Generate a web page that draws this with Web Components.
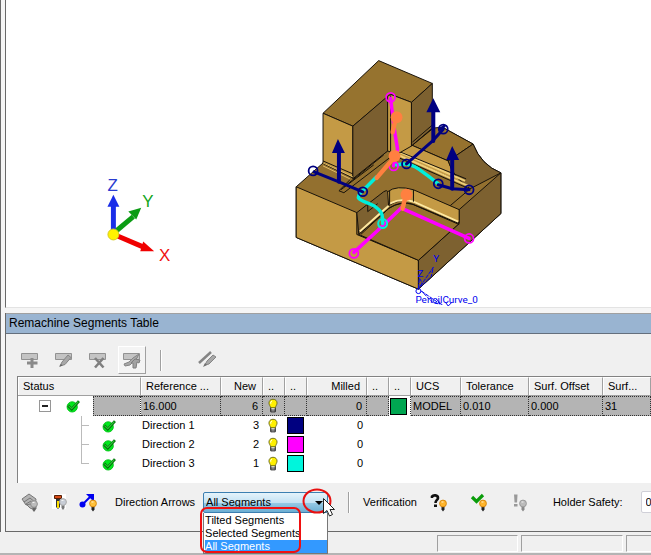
<!DOCTYPE html>
<html lang="en">
<head>
<meta charset="utf-8">
<title>Remachine Segments Table</title>
<style>
  html, body { margin: 0; height: 100%; }
  body { font: 11px/13px "Liberation Sans", Arial, sans-serif; color: #000; background: #f0f0f0; overflow: hidden; }
</style>
</head>
<body>
<machining-app></machining-app>

<script>
const define = (name, html, setup) => {
  const tpl = document.createElement('template');
  tpl.innerHTML = html;
  customElements.define(name, class extends HTMLElement {
    constructor() {
      super();
      this.attachShadow({ mode: 'open' }).append(tpl.content.cloneNode(true));
    }
    connectedCallback() { if (setup) setup(this, this.shadowRoot); }
  });
};

/* ---------- icons ---------- */
const bar = '<path d="M1.500 3.500h16v6h-16z" fill="#c4c4c4" stroke="#929292"/>';
const smallBulb = (x, y, fill, line, base) =>
  `<g transform="translate(${x} ${y})"><path d="M-1.500 3h3v3l-1.500 2-1.500-2z" fill="${base}"/><circle r="3.400" fill="${fill}" stroke="${line}"/><path d="M-1.500 -1.500h2" stroke="#fff" opacity=".8"/></g>`;
const ICONS = {
  add: bar + '<path d="M10.500 8h3v3.500h4v3h-4v3.500h-3v-3.500H7v-3h3.500z" fill="#8a8a8a"/>',
  edit: bar + '<path d="M6 16l2-4 6-7 3 2.500-6 7z" fill="#a8a8a8" stroke="#858585"/><path d="M5 17l2-3 1.500 1.500z" fill="#666"/>',
  remove: bar + '<path d="M7 8l8.500 9.500M15.500 8L7 17.500" stroke="#808080" stroke-width="2.600"/>',
  tools: bar + '<path d="M2 14l5-2 4-4 6-4-2 4-4 4-3 3-5 1z" fill="#a8a8a8" stroke="#858585"/><path d="M9 13l4-4 5 1-1 3-2-1-1 6h-3v-5z" fill="#a2a2a2" stroke="#7e7e7e"/>',
  compare: '<path d="M1 13L13 2" stroke="#858585" stroke-width="2.500"/><path d="M7 15l2-4 6-6 3 2-7 7z" fill="#a8a8a8" stroke="#858585"/><path d="M5 17l2-4 2 2z" fill="#707070"/>',
  check: '<circle cx="8" cy="11" r="5.700" fill="#00e81c" stroke="#00c014"/><path d="M3.500 9.500L7.500 13.500 15.500 4.500" fill="none" stroke="#006b0a" stroke-width="3"/><path d="M3.800 9.500L7.500 13 14.800 5" fill="none" stroke="#2cc435" stroke-width="1.300"/>',
  bulb: '<path d="M7.500 11.500h5v5h-5z" fill="#fff" stroke="#000"/><path d="M7.500 14.500h5" stroke="#000"/><path d="M10 2.500c-3 0-4.500 2-4.500 4.300 0 1.800 1.300 2.900 2 5.200h5c.7-2.300 2-3.400 2-5.200 0-2.300-1.500-4.300-4.500-4.300z" fill="#fff000" stroke="#66661a"/><path d="M7.500 7.500v-2l1.500-1" stroke="#fff" fill="none"/>',
  layers: '<g fill="#b4b4b4" stroke="#777"><path d="M2 7l7-5 7 5-1 7-5-6-6 2z"/><path d="M4 10l6-4 6 5v6l-6-5-4 1zM6 12l5-3 5 4-1 5-5-2z"/></g>' + smallBulb(14, 12, '#bdbdbd', '#909090', '#666'),
  holder: '<path d="M3 2h14v15H3z" fill="#fff"/><path d="M5.500 3.500h7v3h-7z" fill="#d94b17" stroke="#572006"/><path d="M7 7h4v8l-2 2-2-2z" fill="#333"/><path d="M9 9v7" stroke="#ffe000" stroke-width="2"/>' + smallBulb(14, 10, '#c8cdd6', '#aaa', '#777'),
  vector: '<path d="M5 12L12 5" stroke="#0000f0" stroke-width="2"/><path d="M8 2h8v8z" fill="#0000f0"/><circle cx="4.500" cy="12.500" r="3" fill="#0000f0"/>' + smallBulb(15, 11.5, '#ffc13b', '#d98910', '#222'),
  query: '<path d="M3 6V4.500C4 3 9 2.500 9 6c0 2-2.500 2-2.500 5" fill="none" stroke="#111" stroke-width="2.600"/><path d="M5 12.500h3v2.500H5z" fill="#111"/>' + smallBulb(14, 11.5, '#ffb52b', '#d98910', '#222'),
  verify: '<path d="M3 5l4.500 4.500L14 3" fill="none" stroke="#0a9c0a" stroke-width="3.200"/>' + smallBulb(14, 11.5, '#ffb52b', '#d98910', '#222'),
  warn: '<path d="M5 2.500h3.500l-.5 8H5.500z" fill="#999"/><path d="M5 12h3.500v2.500H5z" fill="#999"/>' + smallBulb(14, 11.5, '#bbb', '#999', '#888'),
};
define('ui-icon', `
<style>:host{display:block;width:20px;height:20px;flex:none} svg{display:block;width:100%;height:100%}</style>
<svg viewBox="0 0 20 20" aria-hidden="true"></svg>`,
(el, root) => { root.querySelector('svg').innerHTML = ICONS[el.getAttribute('name')] || ''; });

define('tool-button', `
<style>
  :host{display:block;flex:none}
  button{display:grid;place-items:center;width:28px;height:28px;padding:0;border:1px solid transparent;background:none}
  :host([raised]) button{border-color:#fff #a0a0a0 #a0a0a0 #fff;background:#f4f4f4}
</style>
<button type="button"></button>`,
(el, root) => {
  const icon = document.createElement('ui-icon');
  icon.setAttribute('name', el.getAttribute('icon'));
  const b = root.querySelector('button');
  b.replaceChildren(icon);
  b.setAttribute('aria-label', el.getAttribute('label'));
});

define('tool-separator', `<style>:host{display:block;flex:none;width:1px;height:21px;background:#a0a0a0;border-right:1px solid #fff}</style>`);

define('panel-title', `
<style>
  :host{display:block;background:#99b4d1;border-top:1px solid #a0a0a0;border-bottom:1px solid #646f7d}
  h2{margin:0;padding:0 3px;font:12px/19px "Liberation Sans",Arial,sans-serif;white-space:nowrap}
</style><h2><slot></slot></h2>`);

/* ---------- 3D view ---------- */
define('scene-view', `
<style>
  :host{display:block;background:#fff;border-left:1px solid #696969;border-bottom:1px solid #e3e3e3;min-height:0;overflow:hidden}
  svg{display:block;width:100%;height:100%}
  .axis{font:17px "Liberation Sans",Arial,sans-serif}
  .tag{font:10px Roboto,"Liberation Sans",sans-serif;fill:#0000f0}
</style>
<svg viewBox="6 0 645 309" role="img" aria-label="Part model with pencil curve segments">
  <g stroke="#16110a" stroke-width="1" stroke-linejoin="round">
    <path d="M296 188L323 164 353 178 391 150 412 140 443 128 474 145Q482 166 502 174L502 215 419 291 296 239Z" fill="#93702f"/>
    <path d="M296 188L357 214V236L419 262V291L296 239Z" fill="#c49a45"/>
    <path d="M419 262L460 225V211L502 174V215L419 291Z" fill="#7d6130"/>
    <path d="M357 214L384 193Q390 188 391 204L359 236Z" fill="#7d6130"/>
    <path d="M388 193Q397 186 414 191L460 211V224L414 203Q401 199 389 207Z" fill="#c49a45"/>
    <path d="M359 236L389 210Q401 202 412 205L460 225 419 262Z" fill="#96722e"/>
    <path d="M360 233L389 207M390 205Q402 199 414 203L459 223" fill="none" stroke="#ffe9a0" stroke-width="2"/>
    <path d="M361 236L390 209Q402 202 414 206L460 226M368 205V213L378 205M414 191V203M390 192V206M451 207L471 190" fill="none"/>
    <path d="M412 146L433 129 443 128 474 145 449 162Z" fill="#96722e"/>
    <path d="M412 146L449 162Q454 179 470 187L394 154V150Z" fill="#c49a45"/>
    <path d="M449 162L474 145Q482 166 502 174L471 190Q454 179 449 162Z" fill="#7d6130"/>
    <path d="M394 154L469 187M398 152L466 182" fill="none" stroke="#efcf7a" stroke-width="2"/>
    <path d="M393 156L470 190M396 151L467 180" fill="none"/>
    <path d="M322 164L353 179 389 151 395 155 344 194 339 192 350 181" fill="#93702f"/>
    <path d="M341 191L374 166M344 188L353 181 384 156" fill="none"/>
    <path d="M379 61L433 84 412 103 391 95 353 127 323 114Z" fill="#96732f"/>
    <path d="M323 114L353 127V179L323 164Z" fill="#c49a45"/>
    <path d="M353 127L388 97V152L353 180Z" fill="#7b5f30"/>
    <path d="M388 97L391 95 412 103V147L398 155 388 152Z" fill="#c49a45"/>
    <path d="M433 84V129L412 147V103Z" fill="#7d6130"/>
    <path d="M323 164L353 178M323 167L350 180" fill="none" stroke="#e3bd67"/>
    <path d="M323 162L353 175M391 96V152M413 143L434 125M413 146L434 129" fill="none"/>
  </g>
  <g fill="none" stroke-linecap="round">
    <path d="M391 99L395 132 398 150 394 167M354 254L378 232 403 208M403 210L470 240" stroke="#f0f" stroke-width="3.500"/>
    <path d="M362 193L377 178M362 193C352 202 366 202 374 207C383 213 383 216 383 225M397 166Q409 163 419 170T439 185" stroke="#00efdc" stroke-width="3.500"/>
    <g stroke="#000080" stroke-width="3"><path d="M314 173L339 183 363 193M407 165L433 142 444 130M439 186L453 190 470 191"/><path d="M339 183V154M434 142V112M453 190V160" stroke-width="4"/></g>
    <g stroke="#f0f" stroke-width="1.800"><circle cx="391" cy="98" r="4.500"/><circle cx="394" cy="167" r="4.500"/><circle cx="354" cy="255" r="4.500"/><circle cx="470" cy="240" r="4.500"/></g>
    <circle cx="383" cy="225" r="4.500" stroke="#00efdc" stroke-width="2"/>
    <g stroke="#000080" stroke-width="1.800"><circle cx="313" cy="172" r="4.500"/><circle cx="363" cy="193" r="4.500"/><circle cx="407" cy="165" r="4.500"/><circle cx="444" cy="130" r="4.500"/><circle cx="439" cy="185" r="4.500"/><circle cx="470" cy="191" r="4.500"/></g>
    <path d="M441 130L445 127" stroke="#000080" stroke-width="3"/>
    <path d="M393 133L396 120M395 158L377 179M403 210L406 198" stroke="#ff8040" stroke-width="4.500"/>
  </g>
  <path d="M332 154L338 140 345 154ZM427 113L434 99 441 113ZM447 161L453 147 460 161Z" fill="#000080"/>
  <g fill="#ff8040"><circle cx="397" cy="118" r="6"/><circle cx="395" cy="157" r="6"/><circle cx="407" cy="196" r="6"/></g>
  <g fill="none" stroke="#0000f0">
    <circle cx="419" cy="293" r="2.500"/>
    <path d="M419 290L420 280 423 285ZM421 288L434 269 432 278 422 288ZM422 293L441 306 434 305Z" stroke-dasharray="4 1"/>
    <path d="M437 301L443 307M446 304L449 308 453 304"/>
  </g>
  <g class="tag"><text x="434" y="264">Y</text><text x="418" y="279">Z</text><text x="416" y="305">PencilCurve_0</text></g>

  <g stroke-width="5">
    <path d="M113 234L132 218" stroke="#0b9c14"/><path d="M127 213L140 209 135 221Z" fill="#0b9c14"/>
    <path d="M115 237L143 249" stroke="#f00000"/><path d="M142 243L153 253 139 253Z" fill="#f00000"/>
    <path d="M112 235V207" stroke="#1a2ee8"/><path d="M106 208L112 196 118 208Z" fill="#1a2ee8"/>
    <circle cx="112" cy="236" r="5.500" fill="#fff200" stroke="#d6ca22" stroke-width="1"/>
  </g>
  <g class="axis"><text x="106" y="192" fill="#2a3cd0">Z</text><text x="141" y="208" fill="#12a51c">Y</text><text x="158" y="263" fill="#f01010">X</text></g>
</svg>`);

/* ---------- table ---------- */
define('color-swatch', `<style>:host{display:block;width:15px;height:15px;border:1px solid #000;background:var(--swatch)}</style>`,
  el => el.style.setProperty('--swatch', el.getAttribute('color')));

const dirRow = (n, count, color) => `<tr><td class="status"><div class="node"><span class="branch${n === 3 ? ' last' : ''}"></span><ui-icon name="check"></ui-icon></div></td><td>Direction ${n}</td><td class="num">${count}</td><td class="mid"><ui-icon name="bulb"></ui-icon></td><td class="sw"><color-swatch color="${color}"></color-swatch></td><td class="num">0</td><td></td><td></td><td></td><td></td><td></td><td></td></tr>`;
define('segments-table', `
<style>
  :host{display:block;margin-left:11px;height:106px;background:#fff;border-left:1px solid #828282;border-top:1px solid #828282;overflow:hidden}
  table{table-layout:fixed;width:100%;border-collapse:separate;border-spacing:0}
  th,td{box-sizing:border-box;height:19px;padding:0 1px;text-align:left;font-weight:normal;white-space:nowrap;overflow:hidden}
  th{background:#f0f0f0;padding:0 5px;border-right:1px solid #a0a0a0;border-bottom:1px solid #a0a0a0;border-top:1px solid #fff;box-shadow:inset 1px 0 #fff}
  .num{text-align:right} td.num{padding-right:4px} th.num{padding-right:6px}
  .sw{padding:0 0 0 2px}
  .pick td{height:20px;background:#b4b4b4;border:1px dotted #333;border-left-width:0;padding-left:2px}
  .pick td.sw{background:#fff;border-color:#fff #333 #fff #fff;padding-left:1px}
  .pick td.status{background:#fff;border-width:0 1px 0 0}
  td.mid,.pick td.mid{padding:0}
  td.status,.pick td.status{padding:0}
  .mid ui-icon{height:18px}
  .node{display:flex;align-items:center;height:19px}
  .pick .node{height:20px}
  .node ui-icon{height:18px}
  .fill{align-self:stretch;flex:1;margin-left:9px;background:#b4b4b4;border:1px dotted #333;border-right:0}
  button{box-sizing:border-box;width:12px;height:12px;margin:0 13px 0 21px;padding:0;border:1px solid #969696;background:linear-gradient(#222,#222) center/6px 2px no-repeat #fff}
  .branch{flex:none;width:8px;height:19px;margin:0 11px 0 63px;background:linear-gradient(#bbb,#bbb) 0 9px/8px 1px no-repeat,linear-gradient(#bbb,#bbb) 0 0/1px 19px no-repeat}
  .branch.last{background-size:8px 1px,1px 10px}
</style>
<table>
  <colgroup><col style="width:123px"><col style="width:80px"><col style="width:42px"><col style="width:22px"><col style="width:22px"><col style="width:60px"><col style="width:22px"><col style="width:22px"><col style="width:50px"><col style="width:68px"><col style="width:74px"><col></colgroup>
  <thead><tr><th>Status</th><th>Reference ...</th><th class="num">New</th><th>..</th><th>..</th><th class="num">Milled</th><th>..</th><th>..</th><th>UCS</th><th>Tolerance</th><th>Surf. Offset</th><th>Surf...</th></tr></thead>
  <tbody>
    <tr class="pick"><td class="status"><div class="node"><button type="button" aria-label="Collapse"></button><ui-icon name="check"></ui-icon><span class="fill"></span></div></td><td>16.000</td><td class="num">6</td><td class="mid"><ui-icon name="bulb"></ui-icon></td><td></td><td class="num">0</td><td></td><td class="sw"><color-swatch color="#00a651"></color-swatch></td><td>MODEL</td><td>0.010</td><td>0.000</td><td>31</td></tr>
    ${dirRow(1, 3, '#000080')}${dirRow(2, 2, '#ff00ff')}${dirRow(3, 1, '#00f5dc')}
  </tbody>
</table>`);

/* ---------- open drop-down ---------- */
define('arrow-select', `
<style>
  :host{display:block;position:relative;flex:none;width:125px}
  select{appearance:none;display:block;box-sizing:border-box;width:100%;height:21px;margin:0;padding:0 20px 0 2px;border:1px solid #3c7fb1;border-radius:2px;background:linear-gradient(#e5f3fb,#c4e2f3 50%,#98cbe6 51%,#6caed2);font:inherit;color:#000}
  .arrow{position:absolute;left:112px;top:9px;border:4px solid transparent;border-top-color:#000;border-bottom:0}
  ul{position:absolute;z-index:2;left:0;top:21px;box-sizing:border-box;width:100%;margin:0;padding:1px 0 0 1px;list-style:none;background:#fff;border:1px solid #777;border-top:0}
  li{line-height:13px;white-space:nowrap}
  li[aria-selected=true]{background:#3399ff;color:#fff}
  svg{position:absolute;z-index:3;left:-4px;top:-6px;width:140px;height:68px;pointer-events:none;overflow:visible}
</style>
<select aria-label="Direction Arrows"><option>Tilted Segments</option><option>Selected Segments</option><option selected>All Segments</option></select>
<span class="arrow"></span>
<ul role="listbox" aria-label="Direction Arrows"><li role="option">Tilted Segments</li><li role="option">Selected Segments</li><li role="option" aria-selected="true">All Segments</li></ul>
<svg viewBox="0 0 140 68" aria-hidden="true">
  <rect x="2" y="22" width="99" height="44" rx="6" fill="none" stroke="#f01010" stroke-width="2"/>
  <ellipse cx="118" cy="15" rx="13.500" ry="11.500" fill="none" stroke="#e81010" stroke-width="2"/>
  <path d="M124.500 12.500v15l3.500-3 2.500 5.500 3-1.500-2.500-5h4.500z" fill="#fff" stroke="#222"/>
</svg>`);

define('status-panes', `
<style>
  :host{display:flex;gap:3px;height:17px;padding:3px 0 1px 437px;border-bottom:2px solid #b4b4b4}
  span{flex:none;box-sizing:border-box;border:1px solid;border-color:#a0a0a0 #fff #fff #a0a0a0}
  .a{width:81px}.b{width:102px}.c{flex:1 0 20px;border-right:0}
</style><span class="a"></span><span class="b"></span><span class="c"></span>`);

define('machining-app', `
<style>
  :host{display:flex;flex-direction:column;height:100vh;overflow:hidden}
  .frame{flex:1;min-height:0;display:flex;flex-direction:column;padding-left:5px;box-shadow:inset 1px 0 #696969;background:#f5f5f5}
  scene-view{flex:1}
  section{margin-top:5px;border-left:1px solid #696969;border-bottom:1px solid #696969;background:#f0f0f0}
  .tools{display:flex;align-items:center;height:42px;padding:10px 0 0 10px;box-sizing:border-box}
  .tools.top{gap:6px}
  .tools.top tool-separator{margin:0 26px 0 8px}
  .tools.bottom{height:48px;padding:0 0 10px 10px}
  .pair{display:flex;gap:1px;flex:none}
  .label{flex:none;white-space:nowrap}
  .dir{margin:0 8px 0 13px}
  .bottom tool-separator{margin:0 13px 0 20px}
  .checks{display:flex;gap:12px;margin:0 20px 0 8px}
  input{flex:none;box-sizing:border-box;width:60px;height:22px;margin:0 0 0 18px;padding:0 4px;border:1px solid #d0d0d8;border-radius:2px;font:inherit;background:#fff}
</style>
<div class="frame">
  <scene-view></scene-view>
  <section>
    <panel-title>Remachine Segments Table</panel-title>
    <div class="tools top">
      <tool-button icon="add" label="Add"></tool-button><tool-button icon="edit" label="Edit"></tool-button><tool-button icon="remove" label="Delete"></tool-button><tool-button raised icon="tools" label="Tools"></tool-button>
      <tool-separator></tool-separator>
      <tool-button icon="compare" label="Modify"></tool-button>
    </div>
    <segments-table></segments-table>
    <div class="tools bottom">
      <div class="pair"><tool-button icon="layers" label="Show layers"></tool-button><tool-button icon="holder" label="Show holder"></tool-button><tool-button icon="vector" label="Show vectors"></tool-button></div>
      <span class="label dir">Direction Arrows</span>
      <arrow-select></arrow-select>
      <tool-separator></tool-separator>
      <span class="label">Verification</span>
      <div class="checks"><tool-button icon="query" label="Show unchecked"></tool-button><tool-button icon="verify" label="Show passed"></tool-button><tool-button icon="warn" label="Show warnings"></tool-button></div>
      <label class="label" for="safety">Holder Safety:</label>
      <input id="safety" value="0">
    </div>
  </section>
</div>
<status-panes></status-panes>`);
</script>
</body>
</html>
